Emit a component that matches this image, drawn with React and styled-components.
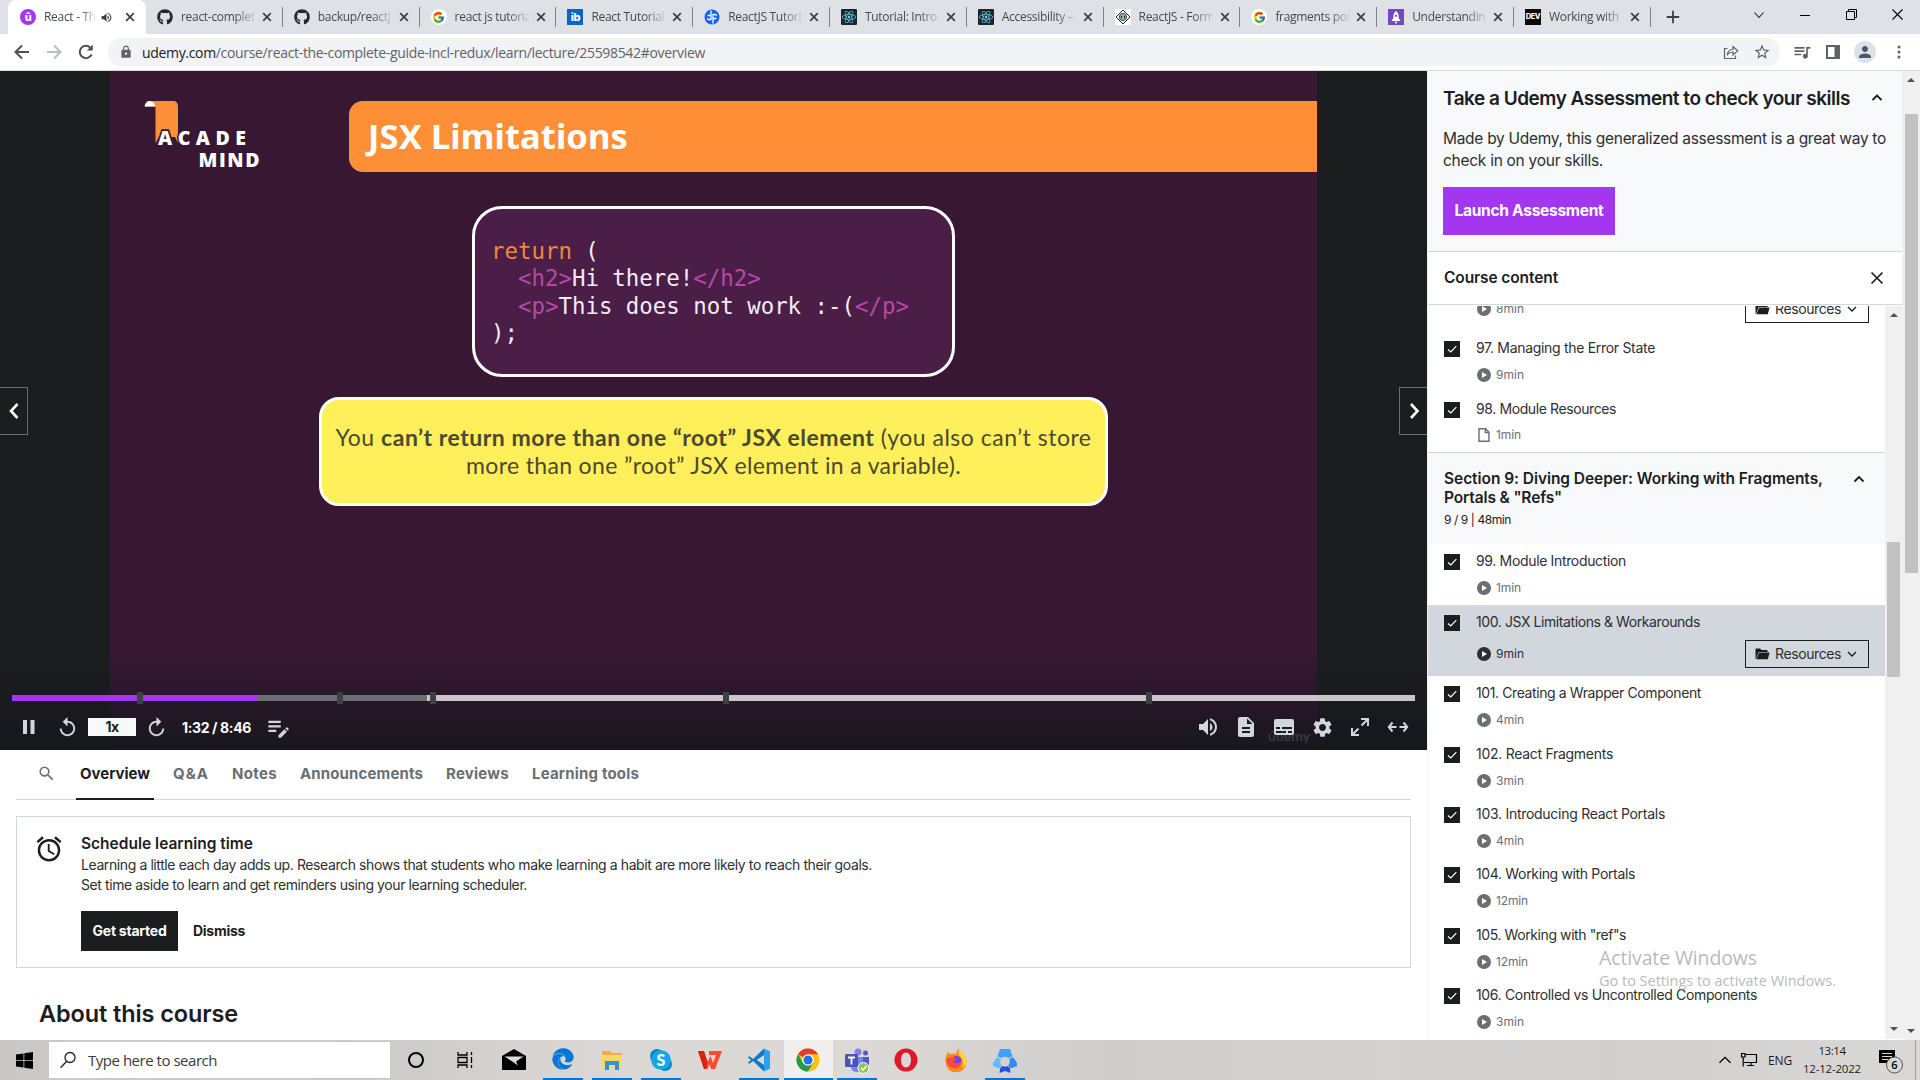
import React, { useLayoutEffect, useRef } from "react";
import styled, { createGlobalStyle } from "styled-components";
import {
  MdReplay, MdVolumeUp, MdDescription, MdSubtitles, MdSettings, MdEditNote, MdAlarm,
  MdSearch, MdLock, MdStarBorder, MdQueueMusic, MdPerson,
} from "react-icons/md";
import { FaGithub, FaReact, FaEdge } from "react-icons/fa";
import { FcGoogle } from "react-icons/fc";

const UI = `Inter, "Liberation Sans", sans-serif`;
const SYS = `"Open Sans", "Noto Sans", sans-serif`;
const INK = "#1c1d1f";
const GREY = "#6a6f73";

const Global = createGlobalStyle`
  * { box-sizing: border-box; }
  body { margin: 0; overflow: hidden; background: #fff; font-family: ${UI}; color: ${INK}; }
  svg { display: block; flex: none; }
`;

/* ---------- text ---------- */
const TextSpan = styled.span`
  display: inline-block;
  white-space: pre;
  font-family: ${(p) => p.$family || UI};
  font-size: ${(p) => p.$size}px;
  font-weight: ${(p) => p.$weight || 400};
  line-height: ${(p) => p.$line}px;
  color: ${(p) => p.$color || "inherit"};
`;

/* One line of text whose tracking is adjusted so that it fills the given width. */
function Text({ width, size = 14, line = 20, weight, color, family, children }) {
  const ref = useRef(null);
  useLayoutEffect(() => {
    const el = ref.current;
    if (!width) return;
    el.style.letterSpacing = "0px";
    const natural = el.getBoundingClientRect().width;
    el.style.letterSpacing = `${(width + 1 - natural) / el.textContent.length}px`;
  }, [width]);
  return (
    <TextSpan ref={ref} $size={size} $line={line} $weight={weight} $color={color} $family={family}>
      {children}
    </TextSpan>
  );
}

/* ---------- page frame ---------- */
const Screen = styled.div`
  width: 1920px;
  height: 1080px;
  display: flex;
  flex-direction: column;
  overflow: hidden;
  position: relative;
`;

/* ---------- browser ---------- */
const TabStrip = styled.div`
  height: 34px;
  background: #dee1e6;
  display: flex;
  padding-left: 8px;
  flex: none;
`;
const TabBox = styled.div`
  width: ${(p) => (p.$active ? 138 : 136.8)}px;
  height: 34px;
  flex: none;
  display: flex;
  align-items: center;
  padding-left: ${(p) => (p.$active ? 12 : 11)}px;
  background: ${(p) => (p.$active ? "#fff" : "transparent")};
  border-radius: 8px 8px 0 0;
`;
const TabTitle = styled.div`
  width: ${(p) => p.$w}px;
  margin: 0 5px 0 8px;
  overflow: hidden;
  white-space: nowrap;
  font: 12px/20px ${SYS};
  letter-spacing: -0.3px;
  color: #45494d;
  mask-image: linear-gradient(90deg, #000 72%, transparent 104%);
`;
const TabDivider = styled.div`
  width: 1px;
  height: 20px;
  margin-left: auto;
  background: ${(p) => (p.$hidden ? "transparent" : "#808489")};
`;
const Speaker = styled.div`
  margin-right: 10px;
  color: #3c4043;
`;
const NewTab = styled.div`
  padding: 10px 0 0 15px;
`;
const WindowButtons = styled.div`
  margin-left: auto;
  display: flex;
  height: 29px;
`;
const WindowButton = styled.div`
  width: 46px;
  display: flex;
  align-items: center;
  justify-content: center;
`;
const Toolbar = styled.div`
  height: 37px;
  flex: none;
  display: flex;
  align-items: center;
  background: #fff;
  border-bottom: 1px solid #d9dbde;
  padding-left: 13px;
  color: #5f6368;
`;
const NavIcons = styled.div`
  display: flex;
  gap: 14px;
  width: 95px;
`;
const Address = styled.div`
  width: 1672px;
  height: 28px;
  border-radius: 14px;
  background: #f1f3f4;
  display: flex;
  align-items: center;
  padding: 0 9px 0 11px;
`;
const AddressText = styled.div`
  margin-left: 9px;
  flex: 1;
  height: 21px;
`;
const Host = styled.span`
  color: #202124;
`;
const AddressIcons = styled.div`
  display: flex;
  gap: 14px;
  align-items: center;
`;
const ToolIcons = styled.div`
  display: flex;
  align-items: center;
  gap: 14px;
  margin-left: 12px;
`;
const Avatar = styled.div`
  width: 22px;
  height: 22px;
  border-radius: 50%;
  background: #dee1e6;
  color: #4c5670;
  display: flex;
  align-items: center;
  justify-content: center;
`;
const Tile = styled.div`
  width: 16px;
  height: 16px;
  flex: none;
  border-radius: ${(p) => p.$r || 0}px;
  background: ${(p) => p.$bg};
  color: ${(p) => p.$fg || "#fff"};
  display: flex;
  align-items: center;
  justify-content: center;
  overflow: hidden;
  font: 800 ${(p) => p.$size || 9}px/16px ${UI};
  letter-spacing: -0.4px;
`;

/* ---------- body ---------- */
const Body = styled.div`
  display: flex;
  height: 969px;
  flex: none;
`;
const Main = styled.div`
  width: 1427px;
  display: flex;
  flex-direction: column;
`;
const Player = styled.div`
  position: relative;
  height: 679px;
  flex: none;
  background: ${INK};
  padding-left: 110px;
`;
const Slide = styled.div`
  width: 1207px;
  height: 679px;
  background: #381733;
  display: flex;
  flex-direction: column;
  align-items: center;
`;
const SlideHead = styled.div`
  display: flex;
  width: 1207px;
  padding: 30px 0 0 34px;
`;
const SlideTitle = styled.div`
  width: 968px;
  height: 71px;
  margin-left: auto;
  border-radius: 14px 0 0 14px;
  background: #ff8f37;
  padding: 11px 0 0 19px;
`;
const CodeBox = styled.div`
  width: 483px;
  height: 171px;
  margin-top: 34px;
  border: 3px solid #fff;
  border-radius: 30px;
  background: #4a1e46;
  padding: 29px 0 0 16px;
  font: 22.4px/27.35px "DejaVu Sans Mono", "Liberation Mono", monospace;
  color: #f3ecf2;
`;
const CodeLine = styled.div`
  height: 27.35px;
  padding-left: ${(p) => (p.$indent ? 27 : 0)}px;
  white-space: pre;
`;
const Keyword = styled.span`
  color: #f0883e;
`;
const Tag = styled.span`
  color: #b548a8;
`;
const Callout = styled.div`
  width: 789px;
  height: 109px;
  margin-top: 20px;
  border: 3px solid #fff;
  border-radius: 20px;
  background: #ffef5a;
  display: flex;
  flex-direction: column;
  align-items: center;
  padding-top: 24px;
  color: #4b4930;
`;
const Shade = styled.div`
  position: absolute;
  left: 0;
  right: 0;
  bottom: 0;
  height: 96px;
  background: linear-gradient(180deg, rgba(20, 23, 28, 0), rgba(20, 23, 28, 0.92));
`;
const Watermark = styled.div`
  position: absolute;
  right: 117px;
  bottom: 3px;
  font: 600 14px/22px Lato, sans-serif;
  color: rgba(150, 145, 155, 0.3);
`;
const SideArrow = styled.div`
  position: absolute;
  top: 316px;
  ${(p) => p.$side}: 0;
  width: 28px;
  height: 48px;
  background: ${INK};
  border: 1px solid ${GREY};
  border-${(p) => p.$side}: 0;
  display: flex;
  align-items: center;
  justify-content: center;
`;
const Track = styled.div`
  position: absolute;
  left: 12px;
  right: 12px;
  top: 624px;
  height: 6px;
  display: flex;
  background: rgba(222, 216, 221, 0.9);
`;
const Played = styled.div`
  width: 246px;
  background: #a435f0;
`;
const Buffered = styled.div`
  width: 169px;
  background: #6a6f73;
`;
const Marker = styled.div`
  position: absolute;
  top: -3px;
  width: 6px;
  height: 12px;
  background: #3e4143;
`;
const Controls = styled.div`
  position: absolute;
  left: 0;
  right: 0;
  top: 637px;
  height: 38px;
  display: flex;
  align-items: center;
  color: #d1d7dc;
  padding: 0 10px;
`;
const ControlButton = styled.div`
  width: ${(p) => p.$w || 38}px;
  height: 38px;
  display: flex;
  align-items: center;
  justify-content: center;
  transform: ${(p) => (p.$flip ? "scaleX(-1)" : "none")};
`;
const Speed = styled.div`
  width: 48px;
  height: 18px;
  margin: 0 2px 0 2px;
  background: #f7f9fa;
  display: flex;
  align-items: center;
  justify-content: center;
`;
const Clock = styled.div`
  margin-left: 6px;
  height: 20px;
  width: 77px;
`;
const Spacer = styled.div`
  flex: 1;
`;

/* ---------- below the player ---------- */
const CourseTabs = styled.div`
  height: 50px;
  margin: 0 16px;
  border-bottom: 1px solid #d1d7dc;
  display: flex;
  padding-left: 21px;
  gap: 15px;
`;
const SearchCell = styled.div`
  width: 24px;
  padding-top: 14px;
  color: ${GREY};
`;
const CourseTab = styled.div`
  height: 50px;
  padding: 13px 4px 0;
  color: ${(p) => (p.$active ? INK : GREY)};
  border-bottom: 2px solid ${(p) => (p.$active ? INK : "transparent")};
`;
const Card = styled.div`
  margin: 16px 16px 0;
  height: 152px;
  border: 1px solid #d1d7dc;
  display: flex;
  padding: 17px 0 0 17px;
  flex: none;
`;
const CardText = styled.div`
  margin-left: 17px;
  display: flex;
  flex-direction: column;
  align-items: flex-start;
`;
const CardCopy = styled.div`
  margin-top: 1px;
  display: flex;
  flex-direction: column;
  align-items: flex-start;
`;
const CardActions = styled.div`
  display: flex;
  align-items: center;
  gap: 15px;
  margin-top: 16px;
`;
const Button = styled.div`
  width: ${(p) => p.$w}px;
  height: ${(p) => p.$h}px;
  background: ${(p) => p.$bg};
  color: #fff;
  display: flex;
  align-items: center;
  justify-content: center;
`;
const About = styled.div`
  padding: 31px 0 0 39px;
`;

/* ---------- sidebar ---------- */
const Side = styled.div`
  width: 475px;
  display: flex;
  flex-direction: column;
  border-left: 1px solid #f0f2f4;
`;
const Assessment = styled.div`
  height: 181px;
  flex: none;
  background: #f7f9fa;
  border-bottom: 1px solid #d1d7dc;
  padding: 15px 15px 0 15px;
`;
const SpreadRow = styled.div`
  display: flex;
  justify-content: space-between;
  align-items: flex-start;
`;
const Copy = styled.div`
  display: flex;
  flex-direction: column;
  align-items: flex-start;
  margin: 16px 0 15px;
`;
const ContentHead = styled.div`
  height: 53px;
  flex: none;
  border-bottom: 1px solid #d1d7dc;
  display: flex;
  align-items: center;
  justify-content: space-between;
  padding: 0 18px 0 16px;
`;
const ListRow = styled.div`
  display: flex;
  margin-top: 1px;
  height: 733px;
`;
const List = styled.div`
  width: 457px;
  height: 733px;
  overflow: hidden;
`;
const FirstItem = styled.div`
  margin-top: -46px;
`;
const Item = styled.div`
  height: ${(p) => p.$h}px;
  display: flex;
  background: ${(p) => (p.$active ? "#d1d7dc" : "#fff")};
  padding: 6px 16px 0 16px;
`;
const Check = styled.div`
  width: 16px;
  height: 16px;
  margin: 4px 16px 0 0;
  background: ${INK};
  display: flex;
  align-items: center;
  justify-content: center;
  flex: none;
`;
const ItemBody = styled.div`
  flex: 1;
  display: flex;
  flex-direction: column;
`;
const ItemTitle = styled.div`
  height: 20px;
  color: #2d2f31;
`;
const Meta = styled.div`
  height: ${(p) => (p.$tall ? 28 : 20)}px;
  margin-top: ${(p) => (p.$tall ? 9 : p.$file ? 7 : 8)}px;
  padding-left: 1px;
  display: flex;
  align-items: center;
  gap: 5px;
  color: ${(p) => (p.$active ? "#2d2f31" : GREY)};
`;
const Resources = styled.div`
  width: 124px;
  height: 28px;
  margin-left: auto;
  border: 1px solid ${INK};
  color: #2d2f31;
  display: flex;
  align-items: center;
  gap: 5px;
  padding-left: 9px;
`;
const SectionHead = styled.div`
  height: 92px;
  background: #f7f9fa;
  border-top: 1px solid #d1d7dc;
  padding: 16px 20px 0 16px;
  display: flex;
  justify-content: space-between;
`;
const SectionText = styled.div`
  display: flex;
  flex-direction: column;
  align-items: flex-start;
`;
const Bar = styled.div`
  width: ${(p) => p.$w}px;
  height: ${(p) => p.$h}px;
  background: #f0f0f0;
  display: flex;
  flex-direction: column;
  align-items: center;
  padding: ${(p) => p.$pad};
`;
const Thumb = styled.div`
  width: 13px;
  height: ${(p) => p.$h}px;
  margin: ${(p) => p.$gap}px 0 auto;
  background: #c1c1c1;
`;
const Activate = styled.div`
  position: absolute;
  left: 1599px;
  top: 945px;
  display: flex;
  flex-direction: column;
  align-items: flex-start;
  color: rgba(140, 140, 140, 0.62);
`;

/* ---------- taskbar ---------- */
const Taskbar = styled.div`
  height: 40px;
  flex: none;
  display: flex;
  background: linear-gradient(90deg, #c9c8c7 0, #cfcdcb 22%, #d9d6d4 30%, #dcd9d6 45%, #cfcdcc 58%, #d4d2d1 72%, #d0cfce 84%, #d9d8d7 100%);
`;
const Start = styled.div`
  width: 48px;
  display: flex;
  align-items: center;
  justify-content: center;
`;
const SearchBox = styled.div`
  width: 343px;
  height: 38px;
  margin-top: 1px;
  background: #fff;
  border: 1px solid #c8c8c8;
  display: flex;
  align-items: center;
  padding-left: 10px;
  gap: 11px;
`;
const Apps = styled.div`
  display: flex;
`;
const AppButton = styled.div`
  width: 49.1px;
  height: 40px;
  display: flex;
  flex-direction: column;
  align-items: center;
  justify-content: space-between;
  padding-top: 8px;
  background: ${(p) => (p.$active ? "#f1efee" : "transparent")};
`;
const Underline = styled.div`
  width: ${(p) => (p.$wide ? 49 : 40)}px;
  height: 2px;
  background: ${(p) => (p.$on ? "#0078d7" : "transparent")};
`;
const Tray = styled.div`
  margin-left: auto;
  display: flex;
  align-items: center;
`;
const Language = styled.div`
  width: 23px;
  margin-left: 6px;
`;
const DateTime = styled.div`
  width: 58px;
  margin: 0 17px 1px 12px;
  display: flex;
  flex-direction: column;
  align-items: center;
`;
const ShowDesktop = styled.div`
  width: 5px;
  height: 40px;
  border-left: 1px solid #a5a4a3;
  margin-left: 11px;
`;

/* ---------- small drawings ---------- */
const Line = ({ w, h, vb, d, c = "currentColor", sw = 1.5, cap = "butt" }) => (
  <svg width={w} height={h || w} viewBox={vb || `0 0 ${w} ${h || w}`} fill="none" stroke={c} strokeWidth={sw} strokeLinecap={cap}>
    <path d={d} />
  </svg>
);
const CloseX = () => <Line w={14} d="M3.2 3.2L10.8 10.8M10.8 3.2L3.2 10.8" c="#3c4043" sw={1.7} />;
const ArrowMark = ({ up }) => (
  <svg width="8" height="4" viewBox="0 0 8 4" fill="#505050"><path d={up ? "M0 4L4 0L8 4z" : "M0 0L4 4L8 0z"} /></svg>
);
const PlayDot = () => (
  <svg width="14" height="14" viewBox="0 0 14 14">
    <circle cx="7" cy="7" r="7" fill="currentColor" />
    <path d="M5 4v6l5-3z" fill="#fff" />
  </svg>
);
const FileMark = () => <Line w={14} d="M2 .8H8.500L12 4.300V13.200H2zM8.300 1V4.600H12" sw={1.4} />;
const Folder = () => (
  <svg width="15" height="12" viewBox="0 0 15 12">
    <path d="M0.5 11V1.2Q.5.5 1.2.5H5l1.6 1.6h5.2q.8 0 .8.8v1H3.6L1 11z" fill={INK} />
    <path d="M4 4.6H14.6L12.8 11.2H1.4z" fill={INK} />
  </svg>
);

const AcademindLogo = () => (
  <svg width="120" height="70" viewBox="0 0 120 70">
    <path d="M1 5.5Q2 0 6 0H30Q34 0.6 34 6V42L31 36H15L11.5 42V5.5z" fill="#ff8f37" />
    <path d="M0.5 5.5Q1.5 0 6 0Q10 .4 11.5 5.5z" fill="#fff" />
    <text x="14" y="44" textLength="88" fontFamily="Open Sans, sans-serif" fontWeight="800" fontSize="19.5" fill="#fff" stroke="#381733" strokeWidth="3.5" paintOrder="stroke">ACADE</text>
    <text x="54.5" y="66" textLength="61" fontFamily="Open Sans, sans-serif" fontWeight="800" fontSize="19.5" fill="#fff">MIND</text>
  </svg>
);

/* ---------- data ---------- */
const ReactTile = <Tile $bg="#20232a" $fg="#61dafb" $r={1}><FaReact size={14} /></Tile>;
const GoogleTile = <Tile $bg="#fff" $r={8}><FcGoogle size={13} /></Tile>;
const tabs = [
  { title: "React - Th", active: true, icon: <Tile $bg="#a435f0" $r={8} $size={11}>û</Tile> },
  { title: "react-complet", icon: <FaGithub size={16} color="#24292f" /> },
  { title: "backup/reactj", icon: <FaGithub size={16} color="#24292f" /> },
  { title: "react js tutoria", icon: GoogleTile },
  { title: "React Tutorial", icon: <Tile $bg="#0a66c2" $size={11}>ib</Tile> },
  {
    title: "ReactJS Tutori",
    icon: (
      <svg width="16" height="16" viewBox="0 0 16 16">
        <circle cx="8" cy="8" r="7.5" fill="#0f62fe" />
        <path d="M7 1.500V10.500H4.500Q3.500 10.500 3.500 9.300M9 14.500V5.500H11.500Q12.500 5.500 12.500 6.700M3.500 6.500H7M9 9.500H12.500" stroke="#fff" strokeWidth="1.300" fill="none" />
      </svg>
    ),
  },
  { title: "Tutorial: Intro", icon: ReactTile },
  { title: "Accessibility –", icon: ReactTile },
  {
    title: "ReactJS - Form",
    icon: (
      <svg width="16" height="16" viewBox="0 0 16 16">
        <rect width="16" height="16" fill="#fff" />
        <path d="M8 1L15 8L8 15L1 8z" fill="none" stroke="#222" strokeWidth="1" />
        <circle cx="8" cy="8" r="3.6" fill="#8fb59b" stroke="#35513e" />
        <path d="M6.5 7v2M9.5 7v2" stroke="#222" />
      </svg>
    ),
  },
  { title: "fragments por", icon: GoogleTile },
  {
    title: "Understandin",
    icon: (
      <Tile $bg="#764abc">
        <svg width="12" height="13" viewBox="0 0 12 13"><path d="M6 0Q9 2 8.6 7L10.5 10H1.5L3.4 7Q3 2 6 0zM4.5 10.8h3L6 13z" fill="#fff" /><circle cx="6" cy="4.8" r="1.1" fill="#764abc" /></svg>
      </Tile>
    ),
  },
  { title: "Working with", icon: <Tile $bg="#0a0a0a" $size={7.5}>DEV</Tile> },
];

const courseTabs = [
  ["Overview", 69], ["Q&A", 35], ["Notes", 44], ["Announcements", 122], ["Reviews", 62], ["Learning tools", 106],
];
const before = [
  { title: "", time: "8min", tw: 27, h: 71, resources: true },
  { title: "97. Managing the Error State", w: 178, time: "9min", tw: 27, h: 61 },
  { title: "98. Module Resources", w: 139, time: "1min", tw: 24, h: 60, file: true },
];
const lessons = [
  { title: "99. Module Introduction", w: 149, time: "1min", tw: 24, h: 61 },
  { title: "100. JSX Limitations & Workarounds", w: 223, time: "9min", tw: 27, h: 71, active: true, resources: true },
  { title: "101. Creating a Wrapper Component", w: 224, time: "4min", tw: 27, h: 61 },
  { title: "102. React Fragments", w: 136, time: "3min", tw: 27, h: 60 },
  { title: "103. Introducing React Portals", w: 188, time: "4min", tw: 27, h: 60 },
  { title: "104. Working with Portals", w: 158, time: "12min", tw: 31, h: 61 },
  { title: '105. Working with "ref"s', w: 149, time: "12min", tw: 31, h: 60 },
  { title: "106. Controlled vs Uncontrolled Components", w: 280, time: "3min", tw: 27, h: 61 },
];
const markers = [125, 325, 418, 711, 1134];

function Lesson({ item }) {
  return (
    <Item $h={item.h} $active={item.active}>
      <Check><Line w={12} d="M2 6.5L4.8 9L10.3 3.2" c="#fff" sw={1.2} /></Check>
      <ItemBody>
        <ItemTitle>{item.title && <Text width={item.w} size={14}>{item.title}</Text>}</ItemTitle>
        <Meta $tall={item.resources} $active={item.active} $file={item.file}>
          {item.file ? <FileMark /> : <PlayDot />}
          <Text width={item.tw} size={12}>{item.time}</Text>
          {item.resources && (
            <Resources>
              <Folder />
              <Text width={65} size={14}>Resources</Text>
              <Line w={12} d="M2 4L6 8L10 4" c={INK} sw={1.3} />
            </Resources>
          )}
        </Meta>
      </ItemBody>
    </Item>
  );
}

const apps = [
  { icon: <svg width="24" height="24" viewBox="0 0 24 24"><circle cx="12" cy="12" r="7" fill="none" stroke="#000" strokeWidth="2" /></svg> },
  { icon: <Line w={24} d="M5 4v3h9V4M5 20v-3h9v3M5 9.500h9v5H5zM18.500 4v3M18.500 9v6M18.500 17v3" c="#000" sw={1.3} /> },
  { icon: <svg width="26" height="24" viewBox="0 0 26 24"><path d="M1 8L13 1L25 8V22H1z" fill="#000" /><path d="M3.500 8.500H22.500L15 13.500L17 17.500L10.500 13z" fill="#dedbd8" /></svg> },
  { on: true, icon: <FaEdge size={22} color="#0078d7" /> },
  {
    on: true,
    icon: (
      <svg width="24" height="24" viewBox="0 0 24 24">
        <path d="M2 3h8l2 2h10v15H2z" fill="#e9b13b" /><path d="M2 7h20v13H2z" fill="#ffd766" />
        <path d="M5 13h14v9h-4v-5H9v5H5z" fill="#3a8fd8" />
      </svg>
    ),
  },
  {
    on: true,
    icon: (
      <svg width="24" height="24" viewBox="0 0 24 24">
        <circle cx="8" cy="8" r="7" fill="#0a84c9" /><circle cx="16" cy="16" r="7" fill="#0a84c9" /><circle cx="12" cy="12" r="9.800" fill="#16a5e8" />
        <text x="12" y="17.500" textAnchor="middle" fontFamily="Lato, sans-serif" fontWeight="900" fontSize="16" fill="#fff">S</text>
      </svg>
    ),
  },
  {
    icon: (
      <svg width="24" height="24" viewBox="0 0 24 24">
        <path d="M0 3H6L9.500 14L12.500 8L15 15L18 7H11V3H24L17 21H13L11.500 16L9.500 21H6z" fill="#ff4a2b" />
        <path d="M0 3H6L9.500 14L8 21H6z" fill="#d9230f" />
      </svg>
    ),
  },
  {
    on: true,
    icon: (
      <svg width="24" height="24" viewBox="0 0 24 24">
        <path d="M17 .5L6 11L2.500 8.300L.8 9.200L4 12L.8 14.800L2.500 15.700L6 13L17 23.500V17L9.800 12L17 7z" fill="#0a7bc8" />
        <path d="M17 .5L23 3.200V20.800L17 23.500z" fill="#2aa3ef" />
      </svg>
    ),
  },
  {
    on: true, active: true, wide: true,
    icon: (
      <svg width="24" height="24" viewBox="0 0 24 24">
        <circle cx="12" cy="12" r="11.500" fill="#fbc116" />
        <path d="M12 12L2.040 6.250A11.500 11.500 0 0 1 21.960 6.250H12z" fill="#e33b2e" />
        <path d="M2.040 6.250A11.500 11.500 0 0 0 12 23.500L17 14.900L12 12L7 14.900z" fill="#229b4b" />
        <circle cx="12" cy="12" r="5.750" fill="#fff" /><circle cx="12" cy="12" r="4.500" fill="#1a73e8" />
      </svg>
    ),
  },
  {
    on: true,
    icon: (
      <svg width="26" height="26" viewBox="0 0 26 26">
        <circle cx="14" cy="4" r="3.500" fill="#7b83eb" /><circle cx="21.500" cy="5" r="2.500" fill="#5059c9" />
        <path d="M17 9h8v7q0 5-5 5h-3z" fill="#5059c9" /><path d="M8 9h11v9q0 6-6 6t-6-6z" fill="#7b83eb" />
        <rect x="1" y="6" width="13" height="13" rx="1" fill="#4b53bc" />
        <path d="M4 9.500h7M7.500 9.500v7" stroke="#fff" strokeWidth="1.800" />
        <circle cx="19.500" cy="20" r="5.500" fill="#92c353" stroke="#fff" />
        <path d="M17 20l2 2l3.500-4" stroke="#fff" strokeWidth="1.600" fill="none" />
      </svg>
    ),
  },
  { icon: <svg width="24" height="24" viewBox="0 0 24 24"><path fillRule="evenodd" d="M12 .5a11.500 11.500 0 1 0 0 23a11.500 11.500 0 1 0 0-23zM12 4.500c3 0 5 3.500 5 7.500s-2 7.500-5 7.500s-5-3.500-5-7.500s2-7.500 5-7.500z" fill="#e0162b" /></svg> },
  {
    icon: (
      <svg width="24" height="24" viewBox="0 0 24 24">
        <path d="M4 4Q5 6 7 6Q10 5 12 6Q12 3 15 .5Q17 4 20 7Q23 10 22.500 14A10.500 10.500 0 0 1 1.500 14Q1 8 4 4z" fill="#ff8a16" />
        <path d="M15 .5Q17 4 20 7Q23 10 22.500 14Q21 19 18 20Q21 12 15 7Q14 4 15 .5z" fill="#ffd43a" />
        <circle cx="12.500" cy="13" r="5" fill="#7542e5" />
        <path d="M2 12Q5 8 9 9.500Q12 10 13 11.500Q10 12 10 14Q13 17 17 14Q16 20 11 20.500Q4 20 2 12z" fill="#ff4a3d" />
      </svg>
    ),
  },
  {
    on: true,
    icon: (
      <svg width="26" height="26" viewBox="0 0 26 26">
        <path d="M8 1h10l2.500 7.500l-4 1.500q-3.500-2.500-7 0l-4-1.500z" fill="#3fa0ff" />
        <path d="M4.800 9.200l4 1.800q-1.600 4 1.200 6.500L7.500 20.500L1 18V15z" fill="#62bcff" />
        <path d="M21.200 9.200l-4 1.800q1.600 4-1.200 6.500l2.500 3L25 18V15z" fill="#2f8bf5" />
        <path d="M8.200 20l2.300-2q2.500 1 5 0l2.300 2l.7 5l-5.500-2l-5.500 2z" fill="#2450e8" />
      </svg>
    ),
  },
];

export default function App() {
  return (
    <Screen>
      <Global />
      <TabStrip>
        {tabs.map((t) => (
          <TabBox key={t.title} $active={t.active}>
            {t.icon}
            <TabTitle $w={t.active ? 51 : 74}>{t.title}</TabTitle>
            {t.active && <Speaker><MdVolumeUp size={13} /></Speaker>}
            <CloseX />
            <TabDivider $hidden={t.active} />
          </TabBox>
        ))}
        <NewTab><Line w={14} d="M7 .8V13.200M.8 7H13.200" c="#3c4043" sw={1.800} /></NewTab>
        <WindowButtons>
          <WindowButton><Line w={12} d="M1.500 3.500L6 8.500L10.500 3.500" c="#222" sw={1.100} /></WindowButton>
          <WindowButton><Line w={10} d="M0 5.500H10" c="#000" sw={1} /></WindowButton>
          <WindowButton><Line w={11} d="M.5 2.500H8.500V10.500H.5zM2.500 2.500V.5H10.500V8.500H8.500" c="#000" sw={1} /></WindowButton>
          <WindowButton><Line w={11} d="M.5 .5L10.500 10.500M10.500 .5L.5 10.500" c="#000" sw={1.100} /></WindowButton>
        </WindowButtons>
      </TabStrip>
      <Toolbar>
        <NavIcons>
          <Line w={18} d="M16 9H3M9 2.500L2.500 9L9 15.500" c="#4d5156" sw={2} />
          <Line w={18} d="M2 9H15M9 2.500L15.500 9L9 15.500" c="#b9bcc0" sw={2} />
          <svg width="18" height="18" viewBox="0 0 18 18"><path d="M14.600 11.500A6.200 6.200 0 1 1 13.400 4.600" fill="none" stroke="#4d5156" strokeWidth="2" /><path d="M15.800 1.500V7.500H9.800z" fill="#4d5156" /></svg>
        </NavIcons>
        <Address>
          <MdLock size={14} />
          <AddressText>
            <Text width={562} size={14} family={SYS} color="#5f6368">
              <Host>udemy.com</Host>/course/react-the-complete-guide-incl-redux/learn/lecture/25598542#overview
            </Text>
          </AddressText>
          <AddressIcons>
            <Line w={16} d="M4.500 4.500H1.500V14.500H12.500V11.500M4.500 10.500Q5 5.500 10 5.500V2.500L14.800 6.800L10 11V8Q6.500 8 4.500 10.500z" sw={1.200} />
            <MdStarBorder size={18} />
          </AddressIcons>
        </Address>
        <ToolIcons>
          <MdQueueMusic size={20} />
          <svg width="14" height="14" viewBox="0 0 14 14"><path fillRule="evenodd" d="M0 0H14V14H0zM2 2V12H8.500V2z" fill="#5f6368" /></svg>
          <Avatar><MdPerson size={18} /></Avatar>
          <svg width="18" height="14" viewBox="0 0 18 14" fill="#5f6368"><circle cx="9" cy="2" r="1.500" /><circle cx="9" cy="7" r="1.500" /><circle cx="9" cy="12" r="1.500" /></svg>
        </ToolIcons>
      </Toolbar>

      <Body>
        <Main>
          <Player>
            <Slide>
              <SlideHead>
                <AcademindLogo />
                <SlideTitle>
                  <Text width={259} size={34.5} line={48} weight={700} color="#fff" family={`"Noto Sans", sans-serif`}>JSX Limitations</Text>
                </SlideTitle>
              </SlideHead>
              <CodeBox>
                <CodeLine><Keyword>return</Keyword>{" ("}</CodeLine>
                <CodeLine $indent><Tag>{"<h2>"}</Tag>Hi there!<Tag>{"</h2>"}</Tag></CodeLine>
                <CodeLine $indent><Tag>{"<p>"}</Tag>{"This does not work :-("}<Tag>{"</p>"}</Tag></CodeLine>
                <CodeLine>{");"}</CodeLine>
              </CodeBox>
              <Callout>
                <Text width={755} size={23} line={27.500} family="Lato, sans-serif">
                  You <b>can’t return more than one “root” JSX element</b> (you also can’t store
                </Text>
                <Text width={494} size={23} line={27.500} family="Lato, sans-serif">
                  more than one ”root” JSX element in a variable).
                </Text>
              </Callout>
            </Slide>
            <Shade />
            <Watermark>ûdemy</Watermark>
            <SideArrow $side="left"><Line w={12} h={18} d="M9.500 2L3 9L9.500 16" c="#fff" sw={2.600} /></SideArrow>
            <SideArrow $side="right"><Line w={12} h={18} d="M3 2L9.500 9L3 16" c="#fff" sw={2.600} /></SideArrow>
            <Track>
              <Played />
              <Buffered />
              {markers.map((x) => <Marker key={x} style={{ left: x }} />)}
            </Track>
            <Controls>
              <ControlButton><svg width="14" height="14" viewBox="0 0 14 14" fill="#d1d7dc"><path d="M1 0H5V14H1zM8.500 0H12.500V14H8.500z" /></svg></ControlButton>
              <ControlButton><MdReplay size={23} /></ControlButton>
              <Speed><Text width={12} size={14} line={16} weight={700} color={INK}>1x</Text></Speed>
              <ControlButton $flip><MdReplay size={23} /></ControlButton>
              <Clock><Text width={68} size={14} weight={700} color="#fff">1:32 / 8:46</Text></Clock>
              <ControlButton><MdEditNote size={27} /></ControlButton>
              <Spacer />
              <ControlButton><MdVolumeUp size={24} /></ControlButton>
              <ControlButton><MdDescription size={24} /></ControlButton>
              <ControlButton><MdSubtitles size={24} /></ControlButton>
              <ControlButton><MdSettings size={23} /></ControlButton>
              <ControlButton><Line w={20} d="M11 2H18V9M18 2L11.500 8.500M9 18H2V11M2 18L8.500 11.500" sw={2} /></ControlButton>
              <ControlButton><Line w={22} d="M9.500 11H2M5.500 6.500L1.800 11L5.500 15.500M12.500 11H20M16.500 6.500L20.200 11L16.500 15.500" sw={2} /></ControlButton>
            </Controls>
          </Player>
          <CourseTabs>
            <SearchCell><MdSearch size={19} /></SearchCell>
            {courseTabs.map(([name, w], i) => (
              <CourseTab key={name} $active={i === 0}><Text width={w} size={15} weight={700}>{name}</Text></CourseTab>
            ))}
          </CourseTabs>
          <Card>
            <MdAlarm size={30} />
            <CardText>
              <Text width={171} size={15.500} weight={600}>Schedule learning time</Text>
              <CardCopy>
                <Text width={790} size={14} color="#2d2f31">Learning a little each day adds up. Research shows that students who make learning a habit are more likely to reach their goals.</Text>
                <Text width={445} size={14} color="#2d2f31">Set time aside to learn and get reminders using your learning scheduler.</Text>
              </CardCopy>
              <CardActions>
                <Button $w={97} $h={40} $bg={INK}><Text width={73} size={14} weight={700}>Get started</Text></Button>
                <Text width={51} size={14} weight={700}>Dismiss</Text>
              </CardActions>
            </CardText>
          </Card>
          <About><Text width={198} size={23.500} line={30} weight={600}>About this course</Text></About>
        </Main>

        <Side>
          <Assessment>
            <SpreadRow>
              <Text width={406} size={19} line={26} weight={600}>Take a Udemy Assessment to check your skills</Text>
              <Line w={20} h={24} d="M5.500 14L10 9.500L14.500 14" c={INK} sw={1.800} />
            </SpreadRow>
            <Copy>
              <Text width={442} size={15.500} line={22} color="#2d2f31">Made by Udemy, this generalized assessment is a great way to</Text>
              <Text width={159} size={15.500} line={22} color="#2d2f31">check in on your skills.</Text>
            </Copy>
            <Button $w={172} $h={48} $bg="#a435f0"><Text width={148} size={15.500} weight={700}>Launch Assessment</Text></Button>
          </Assessment>
          <ContentHead>
            <Text width={113} size={15.500} weight={600}>Course content</Text>
            <Line w={14} d="M1.500 1.500L12.500 12.500M12.500 1.500L1.500 12.500" c={INK} sw={1.700} />
          </ContentHead>
          <ListRow>
            <List>
              <FirstItem>{before.map((it) => <Lesson key={it.time} item={it} />)}</FirstItem>
              <SectionHead>
                <SectionText>
                  <Text width={378} size={15.500} line={19} weight={600}>Section 9: Diving Deeper: Working with Fragments,</Text>
                  <Text width={117} size={15.500} line={19} weight={600}>{'Portals & "Refs"'}</Text>
                  <Text width={66} size={12} line={26}>9 / 9 | 48min</Text>
                </SectionText>
                <Line w={12} h={20} d="M1.500 12.500L6 8L10.500 12.500" c={INK} sw={1.800} />
              </SectionHead>
              {lessons.map((it) => <Lesson key={it.title} item={it} />)}
            </List>
            <Bar $w={17} $h={733} $pad="7px 0 8px"><ArrowMark up /><Thumb $h={135} $gap={225} /><ArrowMark /></Bar>
          </ListRow>
        </Side>
        <Bar $w={18} $h={969} $pad="7px 0 7px"><ArrowMark up /><Thumb $h={459} $gap={32} /><ArrowMark /></Bar>
      </Body>

      <Taskbar>
        <Start><svg width="17" height="17" viewBox="0 0 17 17"><path d="M0 2.500L7.500 1.400V8H0zM8.300 1.300L17 0V8H8.300zM0 8.800H7.500V15.600L0 14.500zM8.300 8.800H17V17L8.300 15.700z" /></svg></Start>
        <SearchBox>
          <svg width="18" height="18" viewBox="0 0 18 18" fill="none" stroke="#222" strokeWidth="1.300"><circle cx="11" cy="6.500" r="5" /><path d="M7.500 10.500L1.500 16.800" /></svg>
          <Text width={128} size={15} family={SYS} color="#3a3a3a">Type here to search</Text>
        </SearchBox>
        <Apps>
          {apps.map((a, i) => (
            <AppButton key={i} $active={a.active}>{a.icon}<Underline $on={a.on} $wide={a.wide} /></AppButton>
          ))}
        </Apps>
        <Tray>
          <Line w={14} d="M1.500 9.800L7 4.300L12.500 9.800" c="#000" sw={1.300} />
          <svg width="30" height="16" viewBox="-8 0 30 16" fill="none" stroke="#000" strokeWidth="1.200"><path d="M5 2.500H16.500V10.500H4M11 10.500V13.500M7 13.500H14M1.500 1.500H5V5H1.500zM3.200 5V14.500" /></svg>
          <Language><Text width={23} size={12} family={SYS}>ENG</Text></Language>
          <DateTime>
            <Text width={26} size={11.500} line={17.500} family={SYS}>13:14</Text>
            <Text width={57} size={11.500} line={17.500} family={SYS}>12-12-2022</Text>
          </DateTime>
          <svg width="26" height="28" viewBox="0 0 26 28">
            <path d="M1 4H17V17H12L9 20V17H1z" fill="#000" />
            <path d="M4 7.500H14M4 10.500H14M4 13.500H10" stroke="#d8d7d6" />
            <circle cx="16.500" cy="19" r="8" fill="#d9d8d7" stroke="#555" />
            <text x="16.500" y="23" textAnchor="middle" fontFamily="Open Sans, sans-serif" fontWeight="600" fontSize="11">6</text>
          </svg>
          <ShowDesktop />
        </Tray>
      </Taskbar>
      <Activate>
        <Text width={157} size={19.500} line={26} family={SYS}>Activate Windows</Text>
        <Text width={236} size={14.500} line={20} family={SYS}>Go to Settings to activate Windows.</Text>
      </Activate>
    </Screen>
  );
}
